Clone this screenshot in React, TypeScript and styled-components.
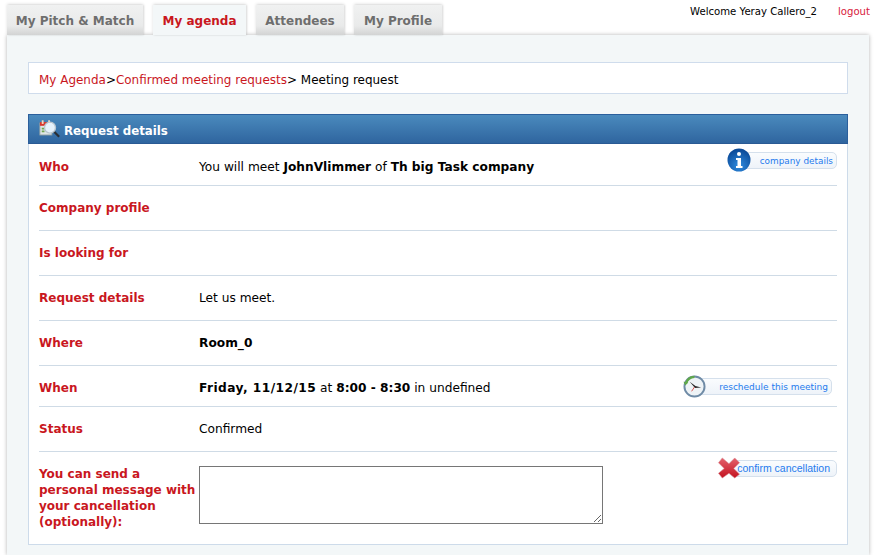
import React from "react";
import styled, { createGlobalStyle } from "styled-components";

const GlobalStyle = createGlobalStyle`
    html, body {
        margin: 0;
        padding: 0;
        height: 555px;
        overflow: hidden;
        background: #fff;
    }
    body {
        font-family: "DejaVu Sans", Verdana, sans-serif;
        font-size: 13px;
        color: #000;
    }
`;

const Page = styled.div`
    width: 877px;
    height: 555px;
    overflow: hidden;
`;

const TopBar = styled.div`
    display: flex;
    justify-content: space-between;
    height: 35px;
    padding: 0 7px;
`;

const Tabs = styled.nav`
    display: flex;
    gap: 10px;
    padding-top: 5px;
`;

const Tab = styled.a<{ $active?: boolean; $width: number }>`
    display: flex;
    align-items: center;
    justify-content: center;
    width: ${(p) => p.$width}px;
    height: 30px;
    box-sizing: border-box;
    padding-top: 1px;
    font-size: 12px;
    font-weight: bold;
    color: ${(p) => (p.$active ? "#c9171e" : "#6e6e6e")};
    background: ${(p) => (p.$active ? "#f3f7f8" : "linear-gradient(#f0f1f1 0%, #e9eaea 70%, #d2d3d3 100%)")};
    box-shadow: 0 -1px 3px rgba(0, 0, 0, 0.12), 1px 0 2px rgba(0, 0, 0, 0.1);
`;

const UserInfo = styled.div`
    display: flex;
    gap: 21px;
    padding-top: 5px;
    font-size: 10.15px;
    line-height: 14px;
    white-space: nowrap;
`;

const Logout = styled.a`
    color: #d8203c;
`;

const Main = styled.main`
    width: 862px;
    height: 520px;
    margin-left: 7px;
    box-sizing: border-box;
    padding: 27px 21px 0;
    background: #f3f7f8;
    box-shadow: 0 0 4px rgba(0, 0, 0, 0.3);
`;

const Breadcrumb = styled.div`
    height: 32px;
    box-sizing: border-box;
    display: flex;
    align-items: center;
    padding: 3px 0 0 10px;
    background: #fff;
    border: 1px solid #cfdcec;
    font-size: 11.97px;
    white-space: pre;
`;

const Crumb = styled.a`
    color: #c9171e;
`;

const Panel = styled.section`
    margin-top: 20px;
    height: 431px;
    box-sizing: border-box;
    background: #fff;
    border: 1px solid #cddbea;
    border-top: 0;
`;

const PanelHeader = styled.header`
    height: 30px;
    margin: 0 -1px;
    box-sizing: border-box;
    display: flex;
    align-items: center;
    gap: 3px;
    padding-left: 10px;
    background: linear-gradient(#4a8abd, #2f659f);
    border: 1px solid #2b5f9c;
    border-bottom-color: #2a5a94;
    color: #fff;
    font-size: 11.8px;
    font-weight: bold;
`;

const PanelTitle = styled.span`
    padding-top: 3px;
`;

const Rows = styled.div`
    padding: 0 10px;
`;

const Row = styled.div<{ $height: number; $shift?: number; $last?: boolean }>`
    display: flex;
    position: relative;
    align-items: center;
    height: ${(p) => p.$height}px;
    padding-top: ${(p) => p.$shift || 0}px;
    box-sizing: border-box;
    border-bottom: ${(p) => (p.$last ? "0" : "1px solid #cfdbe6")};
`;

const MessageRow = styled(Row)`
    align-items: flex-start;
    padding-top: 14px;
`;

const Label = styled.div`
    width: 160px;
    flex: none;
    color: #c9171e;
    font-size: 12px;
    font-weight: bold;
    line-height: 16px;
`;

const Value = styled.div`
    font-size: 12.2px;
    white-space: pre;
`;

const DateText = styled.b`
    letter-spacing: 0.45px;
`;

const Message = styled.textarea`
    display: block;
    width: 404px;
    height: 58px;
    box-sizing: border-box;
    background: #fff;
    border: 1px solid #767676;
    border-radius: 0;
    padding: 2px;
`;

const ActionLink = styled.a<{ $right: number; $top: number; $width: number; $font: string; $size: number }>`
    position: absolute;
    right: ${(p) => p.$right}px;
    top: ${(p) => p.$top}px;
    width: ${(p) => p.$width}px;
    height: 17px;
    box-sizing: border-box;
    display: flex;
    align-items: center;
    justify-content: flex-end;
    padding: 0 ${(p) => (p.$size > 10 ? 6 : 3)}px ${(p) => (p.$size > 10 ? 2 : 0)}px 0;
    background: linear-gradient(#fafcfe, #eef3f9);
    border: 1px solid #d5e0ec;
    border-radius: 5px;
    color: #1f7bee;
    font-family: ${(p) => p.$font};
    font-size: ${(p) => p.$size}px;
    white-space: nowrap;
`;

const ActionIcon = styled.svg<{ $left: number; $top: number }>`
    position: absolute;
    left: ${(p) => p.$left}px;
    top: ${(p) => p.$top}px;
`;

const AgendaIcon = () => (
    <svg width="22" height="18" viewBox="0 0 24 19">
        <rect x="1" y="3" width="13" height="13" fill="#dfe6e6" stroke="#9aa7a7" />
        <rect x="1" y="2" width="13" height="4" fill="#d8362c" />
        <rect x="3" y="0" width="2" height="4" fill="#f3d9c0" />
        <rect x="10" y="0" width="2" height="4" fill="#f3d9c0" />
        <path d="M3 8h3v2H3zM3 11h3v2H3z" fill="#6fa64f" />
        <line x1="16" y1="12" x2="22" y2="18" stroke="#2a2f35" strokeWidth="2.4" />
        <circle cx="12" cy="8" r="6" fill="#e6f2fb" stroke="#b9c6cf" strokeWidth="1.5" />
    </svg>
);

const InfoIcon = () => (
    <ActionIcon $left={-13} $top={-5} width="24" height="24" viewBox="0 0 24 24">
        <defs>
            <radialGradient id="infoBall" cx="50%" cy="75%" r="70%">
                <stop offset="0" stopColor="#2f8ce0" />
                <stop offset="1" stopColor="#0b4a98" />
            </radialGradient>
        </defs>
        <circle cx="12" cy="12" r="11.5" fill="url(#infoBall)" />
        <circle cx="12" cy="6" r="2" fill="#fff" />
        <path d="M9 10h5v8h1.5v2h-6.5v-2h1.5v-6H9z" fill="#fff" />
    </ActionIcon>
);

const ClockIcon = () => (
    <ActionIcon $left={-13} $top={-4} width="23" height="23" viewBox="0 0 24 24">
        <circle cx="12" cy="12" r="10.5" fill="#eef3f6" stroke="#6f8ba6" strokeWidth="2" />
        <path d="M3 9a10 10 0 0 1 9-7" fill="none" stroke="#5fa84a" strokeWidth="2.4" />
        <path d="M0.5 7l5 0.5-3 3.5z" fill="#5fa84a" />
        <path d="M7 7l6 4.5 6 1.5-6.5 0.5z" fill="#2b2b2b" />
        <line x1="12" y1="12.5" x2="9" y2="17" stroke="#d9534f" />
    </ActionIcon>
);

const CrossIcon = () => (
    <ActionIcon $left={-13} $top={-4} width="24" height="22" viewBox="0 0 24 23">
        <defs>
            <linearGradient id="crossRed" x1="0" y1="0" x2="0" y2="1">
                <stop offset="0" stopColor="#e4616c" />
                <stop offset="1" stopColor="#c3121f" />
            </linearGradient>
        </defs>
        <path
            d="M5 1l7 6 6-6 5 5-6 6 6 6-5 4-6-5-7 5-4-5 6-5-6-6z"
            fill="url(#crossRed)"
            stroke="#d88a92"
            strokeWidth="0.6"
        />
    </ActionIcon>
);

const App = () => {
    return (
        <Page>
            <GlobalStyle />
            <TopBar>
                <Tabs>
                    <Tab $width={136}>My Pitch &amp; Match</Tab>
                    <Tab $width={93} $active>My agenda</Tab>
                    <Tab $width={88}>Attendees</Tab>
                    <Tab $width={88}>My Profile</Tab>
                </Tabs>
                <UserInfo>
                    <span>Welcome Yeray Callero_2</span>
                    <Logout>logout</Logout>
                </UserInfo>
            </TopBar>
            <Main>
                <Breadcrumb>
                    <Crumb>My Agenda</Crumb>&gt;<Crumb>Confirmed meeting requests</Crumb>&gt; Meeting request
                </Breadcrumb>
                <Panel>
                    <PanelHeader>
                        <AgendaIcon />
                        <PanelTitle>Request details</PanelTitle>
                    </PanelHeader>
                    <Rows>
                        <Row $height={42} $shift={4}>
                            <Label>Who</Label>
                            <Value>
                                You will meet <b>JohnVlimmer</b> of <b>Th big Task company</b>
                            </Value>
                            <ActionLink $right={0} $top={8} $width={98} $size={8.9} $font={'"DejaVu Sans", sans-serif'}>
                                <InfoIcon />
                                company details
                            </ActionLink>
                        </Row>
                        <Row $height={45}>
                            <Label>Company profile</Label>
                        </Row>
                        <Row $height={45}>
                            <Label>Is looking for</Label>
                        </Row>
                        <Row $height={45}>
                            <Label>Request details</Label>
                            <Value>Let us meet.</Value>
                        </Row>
                        <Row $height={45}>
                            <Label>Where</Label>
                            <Value>
                                <b>Room_0</b>
                            </Value>
                        </Row>
                        <Row $height={41} $shift={3}>
                            <Label>When</Label>
                            <Value>
                                <DateText>Friday, 11/12/15</DateText> at <b>8:00 - 8:30</b> in undefined
                            </Value>
                            <ActionLink $right={5} $top={12} $width={137} $size={9} $font={'"DejaVu Sans", sans-serif'}>
                                <ClockIcon />
                                reschedule this meeting
                            </ActionLink>
                        </Row>
                        <Row $height={45}>
                            <Label>Status</Label>
                            <Value>Confirmed</Value>
                        </Row>
                        <MessageRow $height={92} $last>
                            <Label>You can send a personal message with your cancellation (optionally):</Label>
                            <Message />
                            <ActionLink $right={0} $top={8} $width={108} $size={10.5} $font={'"Liberation Sans", Arial, sans-serif'}>
                                <CrossIcon />
                                confirm cancellation
                            </ActionLink>
                        </MessageRow>
                    </Rows>
                </Panel>
            </Main>
        </Page>
    );
};

export default App;
